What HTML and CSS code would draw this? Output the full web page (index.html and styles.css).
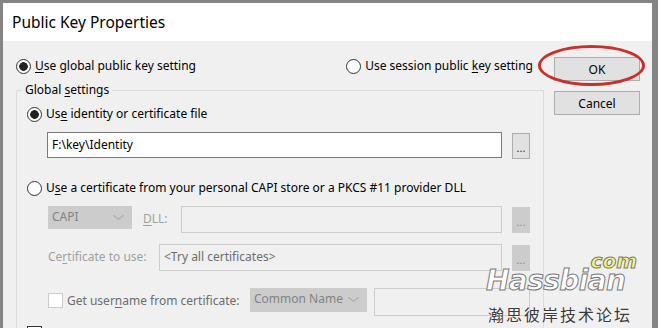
FILE: index.html
```html
<!DOCTYPE html>
<html lang="en">
<head>
  <meta charset="UTF-8" />
  <title>Public Key Properties</title>
  <link rel="stylesheet" href="styles.css">
</head>
<body>

<div class="window">
  <div class="titlebar">Public Key Properties</div>

  <div class="content">
    <div class="main">
      <div class="mode-row">
        <label class="radio"><span class="dot checked"></span><span><u>U</u>se global public key setting</span></label>
        <label class="radio"><span class="dot"></span><span>Use session public <u>k</u>ey setting</span></label>
      </div>

      <fieldset class="group">
        <legend>Global <u>s</u>ettings</legend>

        <div class="row radio-row first">
          <label class="radio"><span class="dot checked"></span><span>Us<u>e</u> identity or certificate file</span></label>
        </div>
        <div class="row file-row">
          <div class="field">F:\key\Identity</div>
          <button class="browse">...</button>
        </div>

        <div class="row radio-row second">
          <label class="radio"><span class="dot"></span><span>U<u>s</u>e a certificate from your personal CAPI store or a PKCS #11 provider DLL</span></label>
        </div>
        <div class="row capi-row">
          <div class="combo off capi">CAPI<span class="chev"></span></div>
          <span class="lbl dll"><u>D</u>LL:</span>
          <div class="field off tall"></div>
          <button class="browse off">...</button>
        </div>
        <div class="row cert-row">
          <span class="lbl cert">Ce<u>r</u>tificate to use:</span>
          <div class="field off tall grey-text">&lt;Try all certificates&gt;</div>
          <button class="browse off">...</button>
        </div>
        <div class="row check-row">
          <span class="box off"></span>
          <span class="lbl user">Get user<u>n</u>ame from certificate:</span>
          <div class="combo off common">Common Name<span class="chev"></span></div>
          <div class="field off taller"></div>
        </div>
        <div class="row last-row">
          <span class="box"></span>
        </div>
      </fieldset>
    </div>

    <div class="buttons">
      <button class="btn">OK</button>
      <button class="btn">Cancel</button>
    </div>
  </div>

  <div class="mark-ok"></div>

  <div class="watermark">
    <div class="wm-com">com</div>
    <div class="wm-name">Hassbian</div>
    <div class="wm-cn">瀚思彼岸技术论坛</div>
  </div>
</div>

</body>
</html>
```

FILE: styles.css
```css
body {
  margin: 0;
  background: #858585;
  font-family: "Noto Sans", sans-serif;
  font-size: 12px;
  color: #000;
}
.window {
  position: relative;
  margin: 3px 6px 0 3px;
  height: 325px;
  background: #f0f0f0;
  overflow: hidden;
}
.titlebar {
  height: 38px;
  line-height: 38px;
  padding-left: 9px;
  background: #fff;
  font-size: 15.5px;
}
.content {
  display: flex;
  gap: 10px;
  padding: 17px 12px 0 13px;
}
.main {
  width: 528px;
  flex: none;
}
.buttons {
  width: 86px;
  display: flex;
  flex-direction: column;
  gap: 10px;
  margin-top: -1px;
}
.btn {
  height: 24px;
  padding: 0;
  background: #e1e1e1;
  border: 1px solid #adadad;
  font: inherit;
  color: #000;
}
u {
  text-decoration-thickness: 1px;
  text-underline-offset: 2px;
}

/* radios */
.mode-row {
  height: 16px;
  display: flex;
  justify-content: space-between;
  align-items: center;
  padding: 0 11px 0 0;
}
.radio {
  display: inline-flex;
  align-items: center;
  gap: 4px;
  line-height: 16px;
  white-space: nowrap;
}
.dot {
  width: 15px;
  height: 15px;
  box-sizing: border-box;
  border: 1px solid #333;
  border-radius: 50%;
  background: #fff;
}
.dot.checked {
  background: radial-gradient(circle, #222 0 4px, #fff 4.6px);
}

/* group box */
.group {
  margin: 8px 0 0 0;
  padding: 0 13px 0 10px;
  border: 1px solid #dcdcdc;
  min-width: 0;
}
.group legend {
  padding: 0 3px;
  margin-left: -5px;
  line-height: 16px;
}
.row {
  display: flex;
  align-items: flex-start;
}
.radio-row {
  height: 16px;
}
.radio-row.first {
  margin-top: 8px;
}
.radio-row.second {
  margin-top: 21px;
}
.file-row {
  margin-top: 10px;
  padding-left: 20px;
  gap: 10px;
}
.field {
  flex: 1;
  height: 26px;
  box-sizing: border-box;
  border: 1px solid #7a7a7a;
  background: #fff;
  padding-left: 4px;
  line-height: 24px;
}
.field.off {
  background: #f0f0f0;
  border-color: #cccccc;
}
.field.tall {
  height: 27px;
}
.field.taller {
  height: 28px;
}
.grey-text {
  color: #6d6d6d;
}
.browse {
  width: 18px;
  height: 26px;
  flex: none;
  padding: 0 0 5px 0;
  margin-top: 1px;
  background: #e1e1e1;
  border: 1px solid #adadad;
  font: inherit;
  font-size: 11px;
  line-height: 10px;
  color: #333;
  display: flex;
  align-items: flex-end;
  justify-content: center;
}
.browse.off {
  background: #cccccc;
  border-color: #cccccc;
  color: #8c8c8c;
}
.capi-row {
  margin-top: 10px;
  padding-left: 21px;
}
.capi-row .browse,
.cert-row .browse {
  margin-left: 10px;
}
.combo {
  position: relative;
  height: 23px;
  box-sizing: border-box;
  padding-left: 4px;
  line-height: 22px;
  flex: none;
}
.combo.off {
  background: #cccccc;
  color: #838383;
}
.combo.capi {
  width: 84px;
}
.combo.common {
  width: 117px;
  height: 24px;
  margin-right: 7px;
}
.chev {
  position: absolute;
  right: 10px;
  top: 6px;
  width: 6px;
  height: 6px;
  border-right: 1px solid #a6a6a6;
  border-bottom: 1px solid #a6a6a6;
  transform: rotate(45deg) skew(-8deg, -8deg);
}
.lbl {
  color: #a0a0a0;
  line-height: 26px;
  white-space: nowrap;
  flex: none;
}
.lbl.dll {
  width: 38px;
  margin-left: 11px;
}
.cert-row {
  margin-top: 11px;
  padding-left: 21px;
}
.lbl.cert {
  width: 111px;
}
.check-row {
  margin-top: 17px;
  padding-left: 21px;
}
.box {
  width: 15px;
  height: 15px;
  box-sizing: border-box;
  border: 1px solid #333;
  background: #fff;
  flex: none;
}
.box.off {
  margin-top: 5px;
  border-color: #cccccc;
}
.lbl.user {
  width: 183px;
  margin-left: 4px;
  color: #6d6d6d;
}
.last-row {
  margin-top: 10px;
}

/* red mark around OK */
.mark-ok {
  position: absolute;
  left: 535px;
  top: 42px;
  width: 107px;
  height: 41px;
  box-sizing: border-box;
  border: 3px solid #c9302c;
  border-radius: 50%;
}

/* watermark */
.watermark {
  position: absolute;
  left: 480px;
  top: 251px;
  width: 160px;
}
.wm-com {
  text-align: right;
  padding-right: 6px;
  font-family: "DejaVu Sans", sans-serif;
  font-weight: bold;
  font-style: oblique;
  font-size: 20px;
  line-height: 15px;
  color: #f4f47a;
  -webkit-text-stroke: 1px #7a7a7a;
}
.wm-name {
  margin-top: 1px;
  font-family: "DejaVu Sans", sans-serif;
  font-weight: bold;
  font-style: oblique;
  font-size: 28px;
  line-height: 22px;
  color: #fff;
  -webkit-text-stroke: 1px #7a7a7a;
  letter-spacing: -0.6px;
  padding-left: 3px;
}
.wm-cn {
  margin-top: 13px;
  padding-left: 5px;
  font-family: "Noto Sans CJK SC", sans-serif;
  font-size: 16px;
  line-height: 18px;
  letter-spacing: 2px;
  color: #3a3a3a;
  text-shadow: 0 0 2px #fff;
}
```
